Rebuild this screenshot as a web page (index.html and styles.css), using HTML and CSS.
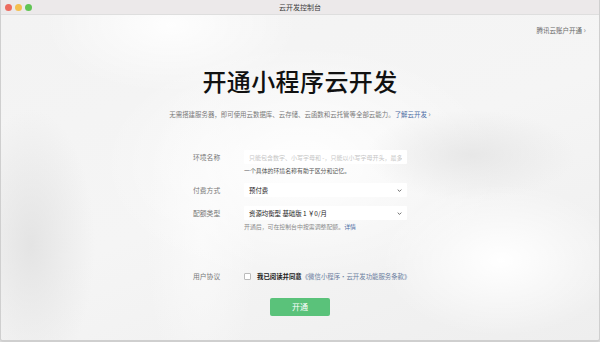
FILE: index.html
```html
<!DOCTYPE html>
<html lang="zh-CN">
<head>
<meta charset="utf-8">
<title>云开发控制台</title>
<link rel="stylesheet" href="styles.css">
</head>
<body>
<div class="window">
  <header class="titlebar">
    <div class="lights">
      <span class="light red"></span>
      <span class="light yellow"></span>
      <span class="light green"></span>
    </div>
    <div class="wintitle">云开发控制台</div>
  </header>
  <main class="content">
    <div class="topbar">
      <a class="account">腾讯云账户开通 <span class="gt">›</span></a>
    </div>
    <h1 class="title">开通小程序云开发</h1>
    <p class="subtitle">无需搭建服务器，即可使用云数据库、云存储、云函数和云托管等全部云能力。<a class="link">了解云开发</a> <span class="gt">›</span></p>

    <form class="form">
      <div class="row">
        <label class="label">环境名称</label>
        <div class="field">
          <div class="input"><span class="placeholder">只能包含数字、小写字母和 -，只能以小写字母开头，最多</span></div>
          <div class="help dark">一个具体的环境名称有助于区分和记忆。</div>
        </div>
      </div>
      <div class="row r2">
        <label class="label">付费方式</label>
        <div class="field">
          <div class="select"><span>预付费</span><svg class="chev" viewBox="0 0 8 5" width="5" height="3"><path d="M1 1l3 3 3-3" fill="none" stroke="#555" stroke-width="1.4"/></svg></div>
        </div>
      </div>
      <div class="row r3">
        <label class="label">配额类型</label>
        <div class="field">
          <div class="select"><span>资源均衡型 基础版 1 ￥0/月</span><svg class="chev" viewBox="0 0 8 5" width="5" height="3"><path d="M1 1l3 3 3-3" fill="none" stroke="#555" stroke-width="1.4"/></svg></div>
          <div class="help">开通后，可在控制台中按需调整配额。<a class="link">详情</a></div>
        </div>
      </div>
      <div class="row agree">
        <label class="label">用户协议</label>
        <div class="field check">
          <span class="box"></span>
          <span class="agree-text">我已阅读并同意</span><a class="link muted">《微信小程序·云开发功能服务条款》</a>
        </div>
      </div>
      <div class="actions">
        <button type="button" class="btn">开通</button>
      </div>
    </form>
  </main>
</div>
</body>
</html>
```
FILE: styles.css
```css
* { box-sizing: border-box; margin: 0; padding: 0; }
html, body { width: 600px; height: 342px; overflow: hidden; background: #d9d9d9; }
body {
  font-family: "Noto Sans CJK SC", "Noto Sans", sans-serif;
  color: #333;
}
.window {
  width: 600px;
  height: 342px;
  display: flex;
  flex-direction: column;
  border-left: 1px solid #cfcfcf;
  border-right: 1px solid #cfcfcf;
  border-bottom: 2px solid #cfcfcf;
  border-radius: 0 0 4px 4px;
  overflow: hidden;
}
.titlebar {
  height: 15px;
  flex: none;
  background: #ece9ea;
  border-bottom: 1px solid #dedede;
  display: flex;
  align-items: center;
  position: relative;
}
.lights { display: flex; gap: 3px; padding-left: 4px; }
.light { width: 7px; height: 7px; border-radius: 50%; display: block; }
.red { background: #ec6b5f; }
.yellow { background: #f4bf4f; }
.green { background: #61c454; }
.wintitle {
  position: absolute;
  left: 0; right: 0; top: 0;
  text-align: center;
  font-size: 7px;
  line-height: 15px;
  color: #3c3c3c;
}
.content {
  flex: 1;
  display: flex;
  flex-direction: column;
  align-items: center;
  background-color: #efefef;
  background-image:
    radial-gradient(ellipse 150px 95px at 500px 245px, rgba(255,255,255,1), rgba(255,255,255,0) 80%),
    radial-gradient(ellipse 140px 60px at 470px 140px, rgba(228,228,228,0.8), rgba(228,228,228,0) 75%),
    radial-gradient(ellipse 250px 150px at 300px 150px, rgba(255,255,255,0.95), rgba(255,255,255,0) 80%),
    radial-gradient(ellipse 70px 200px at 200px 220px, rgba(250,250,250,0.9), rgba(250,250,250,0) 80%),
    radial-gradient(ellipse 170px 90px at 170px 10px, rgba(255,255,255,0.9), rgba(255,255,255,0) 75%),
    radial-gradient(ellipse 80px 170px at 30px 230px, rgba(226,226,226,0.9), rgba(226,226,226,0) 80%),
    linear-gradient(160deg, #f3f3f3 0%, #f5f5f5 50%, #eeeeee 100%);
}
.topbar {
  align-self: stretch;
  display: flex;
  justify-content: flex-end;
  padding: 10px 13px 0 0;
  height: 25px;
}
.account {
  font-size: 6.5px;
  color: #6a6a6a;
  line-height: 10px;
}
.gt { font-size: 8px; color: #888; }
.title {
  margin-top: 26px;
  font-size: 24px;
  line-height: 30px;
  font-weight: 500;
  color: #111;
  letter-spacing: 0.4px;
}
.subtitle {
  margin-top: 13px;
  font-size: 6.45px;
  line-height: 10px;
  color: #7a7a7a;
}
.link { color: #4e6ea5; }
.link.muted { color: #6b7ea0; }
.form {
  margin-top: 30px;
  width: 214px;
  display: flex;
  flex-direction: column;
}
.row { display: flex; align-items: flex-start; }
.row.r2 { margin-top: 8px; }
.row.r3 { margin-top: 9px; }
.label {
  width: 51px;
  flex: none;
  font-size: 6.8px;
  line-height: 14px;
  color: #777;
}
.field { width: 163px; }
.input, .select {
  height: 14px;
  background: #fff;
  border-radius: 1px;
  display: flex;
  align-items: center;
  padding: 0 5px;
  font-size: 6.4px;
  color: #222;
}
.placeholder { color: #c6c6c6; font-size: 6px; white-space: nowrap; overflow: hidden; }
.select { justify-content: space-between; }
.chev { display: block; }
.help {
  font-size: 5.9px;
  line-height: 9px;
  margin-top: 2px;
  color: #8a8a8a;
}
.help.dark { color: #555; }
.row.agree { margin-top: 38px; }
.check {
  display: flex;
  align-items: center;
  height: 14px;
  font-size: 6.4px;
  white-space: nowrap;
}
.box {
  width: 7px; height: 7px;
  border: 1px solid #bbb;
  background: #fff;
  border-radius: 1px;
  margin-right: 6px;
  flex: none;
}
.agree-text { color: #222; font-weight: 700; }
.actions { display: flex; justify-content: center; margin-top: 15px; }
.btn {
  width: 60px;
  height: 18px;
  border: none;
  border-radius: 2px;
  background: #5ac27a;
  color: #fff;
  font-family: inherit;
  font-size: 8px;
  line-height: 18px;
}
```
